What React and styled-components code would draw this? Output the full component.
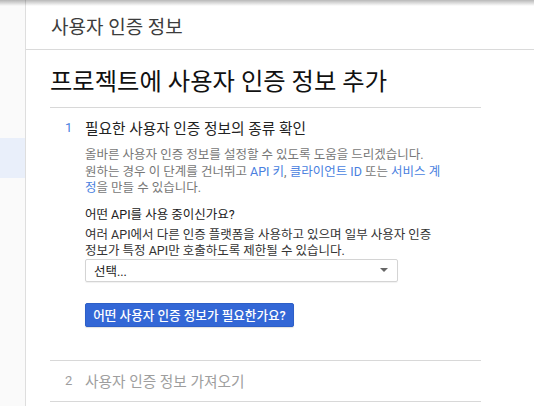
import React from 'react';
import styled, { createGlobalStyle } from 'styled-components';

const GlobalStyle = createGlobalStyle`
  html, body {
    margin: 0;
    padding: 0;
    background: #fff;
    overflow: hidden;
  }
  body {
    font-family: Roboto, "Noto Sans CJK KR", sans-serif;
  }
`;

const Page = styled.div`
  position: relative;
  display: flex;
  width: 534px;
  height: 406px;
  overflow: hidden;

  &::before {
    content: '';
    position: absolute;
    left: 0;
    right: 0;
    top: 0;
    height: 6px;
    background: linear-gradient(to bottom, rgba(0, 0, 0, 0.28), rgba(0, 0, 0, 0));
  }
`;

const Sidebar = styled.div`
  width: 26px;
  flex: 0 0 26px;
  background: #fafafa;
  border-right: 1px solid #dedede;
  padding-top: 138px;
  box-sizing: border-box;
`;

const SideItem = styled.div`
  height: 40px;
  background: ${(p) => (p.$active ? '#e9effa' : 'transparent')};
`;

const Main = styled.div`
  flex: 1;
  display: flex;
  flex-direction: column;
`;

const Header = styled.div`
  height: 50px;
  border-bottom: 1px solid #dadada;
  display: flex;
  align-items: center;
  padding-left: 25px;
  padding-top: 1px;
  box-sizing: border-box;
  font-size: 19px;
  color: #3c3c3c;
`;

const Content = styled.div`
  width: 431px;
  margin-left: 24px;
`;

const Title = styled.h1`
  margin: 0;
  height: 58px;
  display: flex;
  align-items: center;
  padding-top: 2px;
  box-sizing: border-box;
  font-size: 24.3px;
  font-weight: 400;
  color: #111;
  border-bottom: 1px solid #d8d8d8;
`;

const Step = styled.div`
  border-bottom: 1px solid #d8d8d8;
  padding: ${(p) => (p.$collapsed ? '10px 0 10px' : '9px 0 0')};
`;

const StepHead = styled.div`
  display: flex;
  align-items: center;
  height: 20px;
  font-size: 14.7px;
  color: ${(p) => (p.$muted ? '#9e9e9e' : '#222')};
`;

const StepNum = styled.span`
  width: 35px;
  padding-left: 15px;
  box-sizing: border-box;
  font-size: 13px;
  color: ${(p) => (p.$muted ? '#9e9e9e' : '#4a7fe0')};
`;

const StepBody = styled.div`
  padding-left: 35px;
  padding-bottom: 33px;
`;

const Desc = styled.p`
  margin: ${(p) => p.$margin || '0'};
  font-size: 12.5px;
  line-height: 16.5px;
  color: ${(p) => (p.$dark ? '#333' : '#777')};
  white-space: nowrap;
`;

const Question = styled.div`
  margin-top: 9px;
  font-size: 12.5px;
  line-height: 17px;
  color: #222;
`;

const Link = styled.span`
  color: #4a7fe0;
`;

const Select = styled.div`
  margin-top: -1px;
  width: 313px;
  height: 23px;
  box-sizing: border-box;
  border: 1px solid #d4d4d4;
  border-radius: 2px;
  box-shadow: 0 1px 1px rgba(0, 0, 0, 0.06);
  display: flex;
  align-items: center;
  justify-content: space-between;
  padding: 0 9px 0 8px;
  font-size: 12.5px;
  color: #222;
`;

const Caret = styled.span`
  width: 0;
  height: 0;
  border-left: 4px solid transparent;
  border-right: 4px solid transparent;
  border-top: 4px solid #666;
`;

const Button = styled.button`
  display: block;
  margin-top: 21px;
  width: 209px;
  height: 24px;
  border: 1px solid #2d5fc7;
  border-radius: 2px;
  background: #3367d6;
  color: #fff;
  font-family: inherit;
  font-size: 12.6px;
  font-weight: 500;
  padding: 0;
  box-shadow: 0 1px 1px rgba(0, 0, 0, 0.12);
`;

export default function App() {
  return (
    <>
      <GlobalStyle />
      <Page>
        <Sidebar>
          <SideItem $active />
        </Sidebar>
        <Main>
          <Header>사용자 인증 정보</Header>
          <Content>
            <Title>프로젝트에 사용자 인증 정보 추가</Title>
            <Step>
              <StepHead>
                <StepNum>1</StepNum>
                필요한 사용자 인증 정보의 종류 확인
              </StepHead>
              <StepBody>
                <Desc $margin="10px 0 0">
                  올바른 사용자 인증 정보를 설정할 수 있도록 도움을 드리겠습니다.
                  <br />
                  원하는 경우 이 단계를 건너뛰고 <Link>API 키</Link>, <Link>클라이언트 ID</Link> 또는{' '}
                  <Link>서비스 계</Link>
                  <br />
                  <Link>정</Link>을 만들 수 있습니다.
                </Desc>
                <Question>어떤 API를 사용 중이신가요?</Question>
                <Desc $dark $margin="4px 0 0">
                  여러 API에서 다른 인증 플랫폼을 사용하고 있으며 일부 사용자 인증
                  <br />
                  정보가 특정 API만 호출하도록 제한될 수 있습니다.
                </Desc>
                <Select>
                  선택...
                  <Caret />
                </Select>
                <Button>어떤 사용자 인증 정보가 필요한가요?</Button>
              </StepBody>
            </Step>
            <Step $collapsed>
              <StepHead $muted>
                <StepNum $muted>2</StepNum>
                사용자 인증 정보 가져오기
              </StepHead>
            </Step>
          </Content>
        </Main>
      </Page>
    </>
  );
}
